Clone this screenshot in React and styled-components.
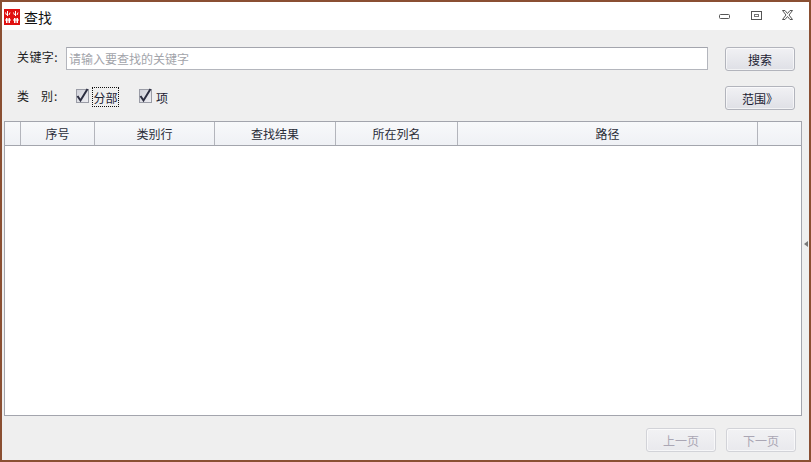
import styled, { createGlobalStyle } from "styled-components";

const Global = createGlobalStyle`
  html, body { margin: 0; padding: 0; }
  body { font-family: "Noto Sans CJK SC", "Liberation Sans", sans-serif; font-size: 12px; color: #222; }
`;

const Win = styled.div`
  box-sizing: border-box;
  position: relative;
  width: 811px;
  height: 462px;
  border: 2px solid #8a4f32;
  background: #efefef;
  display: flex;
  flex-direction: column;
`;

const TitleBar = styled.div`
  height: 28px;
  background: #fff;
  display: flex;
  align-items: center;
  padding: 2px 16px 0 2px;
  box-sizing: border-box;
`;

const Title = styled.div`
  font-size: 14px;
  color: #111;
  margin-left: 4px;
  flex: 1;
`;

const WinBtns = styled.div`
  display: flex;
  gap: 20px;
  align-items: flex-start;
  margin-top: -3px;
`;

const Body = styled.div`
  flex: 1;
  display: flex;
  flex-direction: column;
  padding: 17px 7px 8px 2px;
  min-height: 0;
`;

const Row = styled.div`
  display: flex;
  align-items: flex-start;
  height: 24px;
  padding: 0 7px 0 13px;
  margin-bottom: ${(p) => p.$gap}px;
`;

const Label = styled.span`
  width: ${(p) => p.$w}px;
  flex: none;
  color: #1c1c22;
  line-height: 20px;
  white-space: pre;
`;

const Spread = styled.span`
  letter-spacing: ${(p) => p.$ls}px;
`;

const SearchInput = styled.input`
  box-sizing: border-box;
  width: 642px;
  height: 23px;
  margin-right: 17px;
  padding: 0 2px;
  border: 1px solid #b4b6bd;
  border-top-color: #a3a5ad;
  background: #fff;
  font: inherit;
  outline: none;
  &::placeholder { color: #a2a4aa; opacity: 1; }
`;

const Btn = styled.button`
  box-sizing: border-box;
  width: 70px;
  height: 24px;
  padding: 0;
  border-radius: 3px;
  border: 1px solid ${(p) => (p.disabled ? "#d2d3d8" : "#b2b4bc")};
  background: ${(p) => (p.disabled
    ? "linear-gradient(#f2f2f4, #e9e9ed)"
    : "linear-gradient(#f1f1f4, #dfe0e6)")};
  box-shadow: inset 0 0 0 1px rgba(255, 255, 255, 0.6);
  color: ${(p) => (p.disabled ? "#aaa6b4" : "#1c2233")};
  font: inherit;
`;

const Checks = styled.div`
  flex: 1;
  display: flex;
  align-items: flex-start;
  padding-top: 1px;
`;

const Check = styled.label`
  display: flex;
  align-items: flex-start;
  margin-right: ${(p) => p.$gap}px;
`;

const CheckBox = styled.span`
  box-sizing: border-box;
  width: 13px;
  height: 14px;
  margin: 2px 3px 0 0;
  border: 1px solid #9a9ca6;
  background: linear-gradient(135deg, #d0d1d9, #eeeef2);
  position: relative;
  svg { position: absolute; left: 0; top: -2px; overflow: visible; }
`;

const CheckText = styled.span`
  box-sizing: border-box;
  height: 20px;
  width: ${(p) => p.$w}px;
  color: #1c2233;
  line-height: 19px;
  text-align: center;
  border: ${(p) => (p.$focus ? "1px dotted #111" : "1px solid transparent")};
`;

const Table = styled.div`
  flex: 1;
  min-height: 0;
  border: 1px solid #a3a5ad;
  background: #fff;
`;

const HeadRow = styled.div`
  box-sizing: border-box;
  display: grid;
  grid-template-columns: 16px 74px 120px 121px 122px 300px 1fr;
  height: 24px;
  border-bottom: 1px solid #a3a5ad;
  background: linear-gradient(#f8f9fb, #eff1f5);
`;

const HeadCell = styled.div`
  border-right: 1px solid #b3b5bc;
  text-align: center;
  line-height: 23px;
  color: #2a2d38;
  &:last-child { border-right: 0; }
`;

const Footer = styled.div`
  display: flex;
  justify-content: flex-end;
  gap: 10px;
  padding: 12px 6px 0 0;
`;

const Grip = styled.div`
  position: absolute;
  right: 1px;
  top: 239px;
  width: 0;
  height: 0;
  border-top: 3px solid transparent;
  border-bottom: 3px solid transparent;
  border-right: 4px solid #777;
`;

const Logo = () => (
  <svg width="16" height="16" viewBox="0 0 16 16">
    <rect width="16" height="16" fill="#e01010" />
    <g stroke="#fff" strokeWidth="1" fill="none">
      <path d="M3.500 2v5M1.500 3.500l1 2.500M6 3.500l-1 2.500M11.500 2v5M9.500 3.500l1 2.500M14 3.500l-1 2.500" />
      <path d="M1 11h6M2.500 9v5M4 9v5M5.500 9v5M9 11h6M10.500 9v5M12 9v5M13.500 9v5" />
    </g>
  </svg>
);

const MinIcon = () => (
  <svg width="11" height="9" viewBox="0 0 11 9" style={{ marginRight: 1 }}>
    <rect x="0.500" y="3.500" width="10" height="4" rx="1" fill="#fff" stroke="#555" />
  </svg>
);

const MaxIcon = () => (
  <svg width="11" height="9" viewBox="0 0 11 9">
    <rect x="0.500" y="0.500" width="10" height="8" fill="#fff" stroke="#555" />
    <rect x="3.500" y="3.500" width="4" height="2" fill="#fff" stroke="#777" />
  </svg>
);

const CloseIcon = () => (
  <svg width="11" height="10" viewBox="0 0 11 10" style={{ marginTop: -1 }}>
    <path d="M.5.500h2.500L5.500 3.500 8 .5h2.500L7 5l3.500 4.500H8L5.500 6.500 3 9.500H.5L4 5z" fill="#fff" stroke="#555" />
  </svg>
);

const Tick = () => (
  <svg width="14" height="15" viewBox="0 0 14 15">
    <path d="M0.500 8L3.500 12.500 10.500 1" fill="none" stroke="#2b2d40" strokeWidth="2" />
  </svg>
);

const columns = ["", "序号", "类别行", "查找结果", "所在列名", "路径", ""];

export default function App() {
  return (
    <Win>
      <Global />
      <TitleBar>
        <Logo />
        <Title>查找</Title>
        <WinBtns>
          <MinIcon />
          <MaxIcon />
          <CloseIcon />
        </WinBtns>
      </TitleBar>
      <Body>
        <Row $gap={15}>
          <Label $w={49}><Spread $ls={0.4}>关键字</Spread>:</Label>
          <SearchInput placeholder="请输入要查找的关键字" />
          <Btn>搜索</Btn>
        </Row>
        <Row $gap={11}>
          <Label $w={59}><Spread $ls={12}>类</Spread><Spread $ls={1}>别</Spread>:</Label>
          <Checks>
            <Check $gap={20}>
              <CheckBox><Tick /></CheckBox>
              <CheckText $focus $w={27}>分部</CheckText>
            </Check>
            <Check $gap={0}>
              <CheckBox><Tick /></CheckBox>
              <CheckText $w={14}>项</CheckText>
            </Check>
          </Checks>
          <Btn>范围》</Btn>
        </Row>
        <Table>
          <HeadRow>
            {columns.map((c, i) => (
              <HeadCell key={i}>{c}</HeadCell>
            ))}
          </HeadRow>
        </Table>
        <Footer>
          <Btn disabled>上一页</Btn>
          <Btn disabled>下一页</Btn>
        </Footer>
      </Body>
      <Grip />
    </Win>
  );
}
